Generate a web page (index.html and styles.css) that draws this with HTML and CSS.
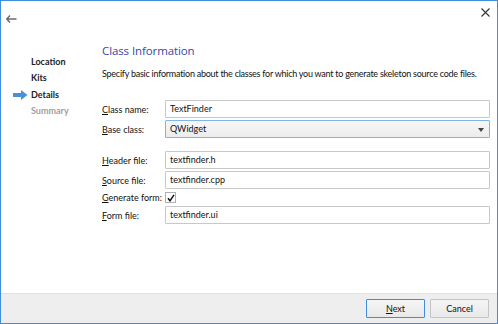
FILE: index.html
```html
<!DOCTYPE html>
<html>
<head>
<meta charset="utf-8">
<link rel="stylesheet" href="styles.css">
</head>
<body>
<div class="window">
  <div class="topbar">
    <svg class="back" width="11" height="8" viewBox="0 0 11 8"><path d="M4 0.5 L0.8 4 L4 7.5 M1 4 H10.5" fill="none" stroke="#6b6b6b" stroke-width="1.4"/></svg>
    <svg class="close" width="9" height="9" viewBox="0 0 9 9"><path d="M0.5 0.5 L8.5 8.5 M8.5 0.5 L0.5 8.5" stroke="#333" stroke-width="1.1"/></svg>
  </div>
  <div class="main">
    <ul class="steps">
      <li class="step">Location</li>
      <li class="step">Kits</li>
      <li class="step current"><svg class="arrow" width="15" height="10" viewBox="0 0 15 10"><path d="M0 3 H8 V0 L14.5 5 L8 10 V7 H0 Z" fill="#4a8fdc"/></svg>Details</li>
      <li class="step pending">Summary</li>
    </ul>
    <div class="page">
      <h1 class="title">Class Information</h1>
      <p class="desc">Specify basic information about the classes for which you want to generate skeleton source code files.</p>
      <div class="form">
        <label class="lbl"><u>C</u>lass name:</label>
        <div class="field">TextFinder</div>
        <label class="lbl"><u>B</u>ase class:</label>
        <div class="field combo">QWidget<span class="caret"></span></div>
        <div class="spacer"></div>
        <label class="lbl"><u>H</u>eader file:</label>
        <div class="field">textfinder.h</div>
        <label class="lbl"><u>S</u>ource file:</label>
        <div class="field">textfinder.cpp</div>
        <label class="lbl"><u>G</u>enerate form:</label>
        <div class="checkrow"><span class="check"><svg width="8" height="8" viewBox="0 0 8 8"><path d="M1 4.2 L3 6.8 L7 0.8" fill="none" stroke="#111" stroke-width="1.5"/></svg></span></div>
        <label class="lbl"><u>F</u>orm file:</label>
        <div class="field">textfinder.ui</div>
      </div>
    </div>
  </div>
  <div class="footer">
    <button class="btn primary"><u>N</u>ext</button>
    <button class="btn">Cancel</button>
  </div>
</div>
</body>
</html>
```
FILE: styles.css
```css
html, body {
  margin: 0;
  padding: 0;
  background: #fff;
}
body {
  font-family: "Lato", "Open Sans", sans-serif;
  font-size: 9px;
  color: #111;
}
.window {
  width: 498px;
  height: 324px;
  box-sizing: border-box;
  border: 1px solid #3d8ee0;
  display: flex;
  flex-direction: column;
  background: #fff;
}
.topbar {
  height: 38px;
  display: flex;
  justify-content: space-between;
  align-items: flex-start;
}
.back {
  margin: 14px 0 0 5px;
}
.close {
  margin: 7px 7px 0 0;
}
.main {
  flex: 1;
  display: flex;
}
.steps {
  list-style: none;
  margin: 15px 0 0 0;
  padding: 0;
  width: 101px;
  flex-shrink: 0;
}
.step {
  height: 16.3px;
  line-height: 16px;
  padding-left: 30px;
  position: relative;
  font-weight: 700;
  color: #222;
}
.step.pending {
  color: #a0a0a0;
}
.arrow {
  position: absolute;
  left: 12px;
  top: 3px;
}
.page {
  flex: 1;
  min-width: 0;
  padding-right: 7px;
}
.title {
  margin: 4px 0 0 0;
  font-family: "Open Sans", sans-serif;
  font-size: 11.5px;
  font-weight: 400;
  color: #3747a8;
  line-height: 16px;
  letter-spacing: -0.1px;
}
.desc {
  margin: 9px 0 0 0;
  line-height: 12px;
  white-space: nowrap;
  letter-spacing: -0.25px;
}
.form {
  margin-top: 20px;
  display: grid;
  grid-template-columns: 63px 1fr;
  row-gap: 2px;
  align-items: center;
}
.lbl u, .btn u {
  text-decoration: underline;
}
.field {
  height: 18px;
  box-sizing: border-box;
  border: 1px solid #c8c8c8;
  border-radius: 1px;
  padding-left: 4px;
  line-height: 16px;
  background: #fff;
}
.combo {
  border-color: #7eb4ea;
  background: linear-gradient(#f7f7f7, #ececec);
  position: relative;
}
.caret {
  position: absolute;
  right: 5px;
  top: 7px;
  width: 0;
  height: 0;
  border-left: 3.5px solid transparent;
  border-right: 3.5px solid transparent;
  border-top: 4px solid #444;
}
.spacer {
  grid-column: 1 / 3;
  height: 9px;
}
.checkrow {
  height: 13px;
  display: flex;
  align-items: center;
}
.check {
  width: 11px;
  height: 11px;
  box-sizing: border-box;
  border: 1px solid #b0b0b0;
  background: #fff;
  display: flex;
  align-items: center;
  justify-content: center;
}
.footer {
  height: 30px;
  background: #eeeeee;
  border-top: 1px solid #e2e2e2;
  display: flex;
  justify-content: flex-end;
  align-items: flex-start;
  gap: 5px;
  padding: 5px 8px 0 0;
  box-sizing: border-box;
}
.btn {
  width: 59px;
  height: 19px;
  font-family: inherit;
  font-size: 9px;
  color: #111;
  border: 1px solid #c4c4c4;
  background: linear-gradient(#f5f5f5, #e9e9e9);
  padding: 0;
  border-radius: 1px;
}
.btn.primary {
  border-color: #3d8ee0;
}
```
